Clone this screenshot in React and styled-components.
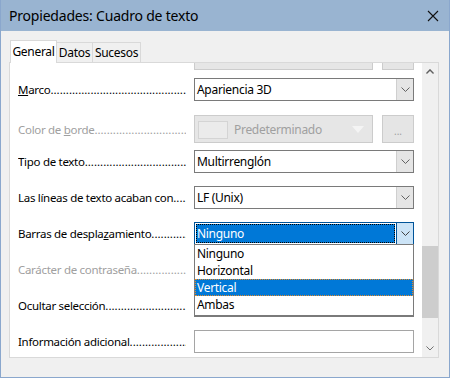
import React from "react";
import styled, { createGlobalStyle, css } from "styled-components";

const GlobalStyle = createGlobalStyle`
    html, body {
        margin: 0;
        padding: 0;
        background: #ffffff;
    }
    body {
        font-family: "Noto Sans", "Open Sans", sans-serif;
        font-size: 11.5px;
        color: #000000;
    }
`;

const Window = styled.div`
    width: 450px;
    height: 378px;
    box-sizing: border-box;
    border: 1px solid #8aa7cd;
    border-top: none;
    background: #f0f0f0;
    display: flex;
    flex-direction: column;
    overflow: hidden;
`;

const TitleBar = styled.div`
    height: 31px;
    flex: none;
    background: #99b4d1;
    display: flex;
    align-items: center;
    justify-content: space-between;
    padding: 0 10px 0 8px;
`;

const Title = styled.span`
    font-size: 14px;
    letter-spacing: -0.2px;
`;

const CloseButton = styled.span`
    display: flex;
    width: 12px;
    height: 12px;
`;

const Body = styled.div`
    flex: 1;
    display: flex;
    flex-direction: column;
    padding: 9px 10px 19px 8px;
    min-height: 0;
`;

const TabRow = styled.div`
    display: flex;
    align-items: flex-end;
    height: 22px;
    padding-left: 1px;
    position: relative;
    z-index: 1;
`;

const Tab = styled.div`
    box-sizing: border-box;
    width: ${(p) => p.$w}px;
    height: 20px;
    border: 1px solid #d9d9d9;
    border-left: none;
    border-bottom: none;
    background: #f0f0f0;
    display: flex;
    align-items: center;
    justify-content: center;
    white-space: nowrap;
    font-size: 12px;
    letter-spacing: -0.3px;
    ${(p) =>
        p.$active &&
        css`
            height: 23px;
            margin-bottom: -1px;
            background: #ffffff;
            border-left: 1px solid #d9d9d9;
            padding-bottom: 2px;
        `}
`;

const Panel = styled.div`
    flex: 1;
    display: flex;
    border: 1px solid #d9d9d9;
    background: #ffffff;
    min-height: 0;
`;

const Content = styled.div`
    flex: 1;
    overflow: hidden;
    padding-left: 8px;
`;

const Rows = styled.div`
    display: flex;
    flex-direction: column;
`;

const Row = styled.div`
    display: grid;
    grid-template-columns: 168px 220px;
    column-gap: 8px;
    align-items: center;
    height: ${(p) => p.$h || 23}px;
    margin-top: ${(p) => p.$mt}px;
`;

const Label = styled.div`
    display: flex;
    white-space: nowrap;
    overflow: hidden;
    color: ${(p) => (p.$disabled ? "#a0a0a0" : "#000000")};
    letter-spacing: -0.3px;
`;

const Dots = styled.span`
    flex: 1;
    overflow: hidden;
    letter-spacing: 0;
    &::after {
        content: "..........................................................................................";
    }
`;

const Cell = styled.div`
    position: relative;
    display: flex;
    gap: 9px;
    height: 100%;
`;

const Combo = styled.div`
    box-sizing: border-box;
    flex: 1;
    height: 100%;
    display: flex;
    border: 1px solid #7a7a7a;
    background: #ffffff;
    ${(p) =>
        p.$focus &&
        css`
            border-color: #005499;
        `}
    ${(p) =>
        p.$disabled &&
        css`
            border-color: #cccccc;
            background: #e6e6e6;
            color: #a0a0a0;
        `}
`;

const Value = styled.div`
    flex: 1;
    display: flex;
    align-items: center;
    padding-left: 2px;
    white-space: nowrap;
    font-size: 12px;
    letter-spacing: -0.3px;
    ${(p) =>
        p.$focus &&
        css`
            margin: 1px;
            padding-left: 1px;
            background: #0078d7;
            color: #ffffff;
            outline: 1px dotted #000000;
            outline-offset: -1px;
        `}
`;

const DropButton = styled.div`
    width: 16px;
    flex: none;
    display: flex;
    align-items: center;
    justify-content: center;
    background: #e5e5e5;
    border-left: 1px solid #cfcfcf;
    ${(p) =>
        p.$focus &&
        css`
            background: #cce4f7;
            border-left: 1px solid #005499;
        `}
`;

const DisabledArrow = styled.div`
    width: 28px;
    flex: none;
    display: flex;
    align-items: center;
    justify-content: center;
`;

const Swatch = styled.div`
    width: 28px;
    height: 16px;
    margin: 5px 4px 0 3px;
    background: #ebebeb;
    border: 1px solid #d4d4d4;
`;

const Ellipsis = styled.div`
    box-sizing: border-box;
    width: 32px;
    height: 100%;
    display: flex;
    align-items: center;
    justify-content: center;
    background: #e5e5e5;
    border: 1px solid #cccccc;
    color: #a0a0a0;
    font-size: 10px;
    padding-top: 4px;
`;

const TextInput = styled.div`
    box-sizing: border-box;
    flex: 1;
    height: 100%;
    border: 1px solid #a5a5a5;
    background: #ffffff;
`;

const ListBox = styled.div`
    position: absolute;
    left: 0;
    right: 0;
    top: calc(100% - 1px);
    height: 72px;
    box-sizing: border-box;
    border: 1px solid #7a7a7a;
    background: #ffffff;
    z-index: 2;
`;

const Option = styled.div`
    height: 17px;
    display: flex;
    align-items: center;
    padding-left: 2px;
    font-size: 12px;
    letter-spacing: -0.3px;
    ${(p) =>
        p.$selected &&
        css`
            background: #0078d7;
            color: #ffffff;
            outline: 1px dotted #e08a2c;
            outline-offset: -1px;
        `}
`;

const ScrollBar = styled.div`
    width: 16px;
    flex: none;
    background: #f0f0f0;
    display: flex;
    flex-direction: column;
`;

const Arrow = styled.div`
    height: 17px;
    flex: none;
    display: flex;
    align-items: center;
    justify-content: center;
`;

const Track = styled.div`
    flex: 1;
    padding-top: 166px;
    padding-bottom: 22px;
    display: flex;
    flex-direction: column;
`;

const Thumb = styled.div`
    flex: 1;
    background: #cdcdcd;
`;

const Chevron = ({ up, color = "#606060", size = 9 }) => (
    <svg width={size} height={size * 0.6} viewBox="0 0 9 5.4">
        <polyline
            points={up ? "0.5,5 4.5,1 8.5,5" : "0.5,0.5 4.5,4.5 8.5,0.5"}
            fill="none"
            stroke={color}
            strokeWidth={up ? 1.6 : 1}
        />
    </svg>
);

const Field = ({ children, disabled, mnemonic }) => (
    <Label $disabled={disabled}>
        <span>
            {mnemonic ? (
                <>
                    {children[0]}
                    <u>{children[1]}</u>
                    {children[2]}
                </>
            ) : (
                children
            )}
        </span>
        <Dots />
    </Label>
);

const Select = ({ value, focus }) => (
    <Combo $focus={focus}>
        <Value $focus={focus}>{value}</Value>
        <DropButton $focus={focus}>
            <Chevron color={focus ? "#404040" : "#606060"} />
        </DropButton>
    </Combo>
);

const options = ["Ninguno", "Horizontal", "Vertical", "Ambas"];

export default function App() {
    return (
        <>
            <GlobalStyle />
            <Window>
                <TitleBar>
                    <Title>Propiedades: Cuadro de texto</Title>
                    <CloseButton>
                        <svg width="12" height="12" viewBox="0 0 12 12">
                            <path d="M1 1L11 11M11 1L1 11" stroke="#111" strokeWidth="1.1" />
                        </svg>
                    </CloseButton>
                </TitleBar>
                <Body>
                    <TabRow>
                        <Tab $active $w={47}>General</Tab>
                        <Tab $w={36}>Datos</Tab>
                        <Tab $w={48}>Sucesos</Tab>
                    </TabRow>
                    <Panel>
                        <Content>
                            <Rows>
                                <Row $mt={-16}>
                                    <Label />
                                    <Cell>
                                        <Combo $disabled />
                                        <Ellipsis />
                                    </Cell>
                                </Row>
                                <Row $mt={8}>
                                    <Field mnemonic>{["", "M", "arco"]}</Field>
                                    <Cell>
                                        <Select value="Apariencia 3D" />
                                    </Cell>
                                </Row>
                                <Row $mt={14} $h={28}>
                                    <Field disabled mnemonic>
                                        {["Color de ", "b", "orde"]}
                                    </Field>
                                    <Cell>
                                        <Combo $disabled>
                                            <Swatch />
                                            <Value>Predeterminado</Value>
                                            <DisabledArrow>
                                                <svg width="12" height="7" viewBox="0 0 12 7">
                                                    <polygon points="0,0 12,0 6,7" fill="#f4f4f4" />
                                                </svg>
                                            </DisabledArrow>
                                        </Combo>
                                        <Ellipsis>...</Ellipsis>
                                    </Cell>
                                </Row>
                                <Row $mt={7}>
                                    <Field>Tipo de texto</Field>
                                    <Cell>
                                        <Select value="Multirrenglón" />
                                    </Cell>
                                </Row>
                                <Row $mt={13}>
                                    <Field>Las líneas de texto acaban con</Field>
                                    <Cell>
                                        <Select value="LF (Unix)" />
                                    </Cell>
                                </Row>
                                <Row $mt={13}>
                                    <Field mnemonic>{["Barras de despla", "z", "amiento"]}</Field>
                                    <Cell>
                                        <Select value="Ninguno" focus />
                                        <ListBox>
                                            {options.map((o) => (
                                                <Option key={o} $selected={o === "Vertical"}>
                                                    {o}
                                                </Option>
                                            ))}
                                        </ListBox>
                                    </Cell>
                                </Row>
                                <Row $mt={13}>
                                    <Field disabled>Carácter de contraseña</Field>
                                    <Cell>
                                        <TextInput />
                                    </Cell>
                                </Row>
                                <Row $mt={13}>
                                    <Field>Ocultar selección</Field>
                                    <Cell>
                                        <Select value="" />
                                    </Cell>
                                </Row>
                                <Row $mt={13}>
                                    <Field>Información adicional</Field>
                                    <Cell>
                                        <TextInput />
                                    </Cell>
                                </Row>
                            </Rows>
                        </Content>
                        <ScrollBar>
                            <Arrow>
                                <Chevron up color="#606060" size={8} />
                            </Arrow>
                            <Track>
                                <Thumb />
                            </Track>
                            <Arrow>
                                <Chevron color="#606060" size={8} />
                            </Arrow>
                        </ScrollBar>
                    </Panel>
                </Body>
            </Window>
        </>
    );
}
